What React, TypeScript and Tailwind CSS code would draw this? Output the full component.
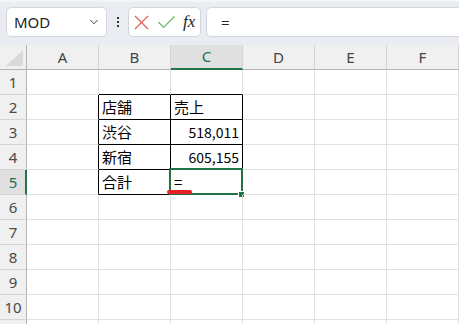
import { Check, ChevronDown, X } from 'lucide-react';

const cols = ['A', 'B', 'C', 'D', 'E', 'F'];
const rows = [1, 2, 3, 4, 5, 6, 7, 8, 9, 10, 11];

const data: Record<string, string> = {
  B2: '店舗',
  C2: '売上',
  B3: '渋谷',
  C3: '518,011',
  B4: '新宿',
  C4: '605,155',
  B5: '合計',
};

const numeric = ['C3', 'C4'];

// border colours per cell so the black table box sits on the grid lines
const borderFor = (r: number, c: string) => {
  const inTable = r >= 2 && r <= 5 && (c === 'B' || c === 'C');
  if (inTable) return 'border-r-black border-b-black';
  if (r === 1 && (c === 'B' || c === 'C')) return 'border-r-[#e1e1e1] border-b-black';
  if (c === 'A' && r >= 2 && r <= 5) return 'border-r-black border-b-[#e1e1e1]';
  return 'border-r-[#e1e1e1] border-b-[#e1e1e1]';
};

const Toolbar = () => (
  <div className="flex h-[45px] items-start border-t-2 border-[#f4f5f7] bg-[#e9ecf0] pl-[6px] pt-[5px]">
    {/* Name box */}
    <div className="flex h-[30px] w-[101px] items-center justify-between rounded-[5px] border border-[#d3d6da] bg-white pl-[7px] pr-[5px]">
      <span className="font-['Noto_Sans',sans-serif] text-[15px] text-[#222]">MOD</span>
      <ChevronDown size={14} strokeWidth={1.6} className="text-[#333]" />
    </div>

    <div className="ml-[10px] flex h-[30px] flex-col items-center justify-center gap-[2px]">
      <span className="h-[2px] w-[2px] bg-[#333]" />
      <span className="h-[2px] w-[2px] bg-[#333]" />
      <span className="h-[2px] w-[2px] bg-[#333]" />
    </div>

    {/* Cancel / enter / function */}
    <div className="ml-[9px] flex h-[30px] w-[73px] items-center rounded-[5px] border border-[#d3d6da] bg-white">
      <X size={25} strokeWidth={1.1} className="shrink-0 text-[#e25b5b]" />
      <Check size={23} strokeWidth={1.2} className="ml-[1px] shrink-0 text-[#5db65d]" />
      <span className="ml-[5px] font-['Liberation_Serif',serif] text-[17px] italic text-[#222]">fx</span>
    </div>

    {/* Formula input */}
    <div className="ml-[5px] mr-[-8px] flex h-[30px] flex-1 items-center rounded-[5px] border border-[#d3d6da] bg-white pl-[14px]">
      <span className="font-['Noto_Sans',sans-serif] text-[15px] text-[#222]">=</span>
    </div>
  </div>
);

const HeaderRow = () => (
  <div className="flex h-[25px]">
    <div className="relative h-[25px] w-[27px] shrink-0 border-b border-r border-[#b4b4b4] bg-[#f0f0f0]">
      <svg className="absolute left-0 top-0" width="26" height="24" viewBox="0 0 26 24">
        <polygon points="6,21 23,21 23,5" fill="#d9d9d9" />
      </svg>
    </div>
    {cols.map((c) =>
      c === 'C' ? (
        <div
          key={c}
          className="flex h-[25px] w-[72px] shrink-0 items-center justify-center border-b-2 border-r border-b-[#217346] border-r-[#d4d4d4] bg-[#e0e0e0] font-['Noto_Sans',sans-serif] text-[15px] text-[#1e6f52]"
        >
          {c}
        </div>
      ) : (
        <div
          key={c}
          className="flex h-[25px] w-[72px] shrink-0 items-center justify-center border-b border-r border-b-[#b4b4b4] border-r-[#d4d4d4] bg-[#f0f0f0] font-['Noto_Sans',sans-serif] text-[15px] text-[#444]"
        >
          {c}
        </div>
      )
    )}
  </div>
);

const Row = ({ r }: { r: number }) => (
  <div className="flex h-[25px]">
    {r === 5 ? (
      <div className="flex h-[25px] w-[27px] shrink-0 items-center justify-center border-b border-r-2 border-b-[#d4d4d4] border-r-[#217346] bg-[#e0e0e0] pl-[1px] font-['Noto_Sans',sans-serif] text-[15px] text-[#1e6f52]">
        {r}
      </div>
    ) : (
      <div className="flex h-[25px] w-[27px] shrink-0 items-center justify-center border-b border-r border-b-[#d4d4d4] border-r-[#b4b4b4] bg-[#f0f0f0] font-['Noto_Sans',sans-serif] text-[15px] text-[#4a4a4a]">
        {r < 11 ? r : ''}
      </div>
    )}
    {cols.map((c) => {
      const id = `${c}${r}`;
      const value = data[id];
      const isNum = numeric.includes(id);
      return (
        <div
          key={id}
          className={`relative flex h-[25px] w-[72px] shrink-0 items-center border-b border-r ${borderFor(r, c)} ${
            isNum ? 'justify-end pr-[3px]' : 'justify-start pl-[3px]'
          } font-['Noto_Sans_CJK_JP',sans-serif] text-[15px] text-black`}
        >
          {value && <span className={isNum ? 'text-[14px]' : ''}>{value}</span>}
          {id === 'C5' && (
            <>
              <span>=</span>
              <div className="absolute left-[-2px] top-[-2px] h-[27px] w-[74px] border-2 border-[#217346]" />
              <div className="absolute bottom-[-3px] right-[-2px] h-[5px] w-[5px] bg-[#217346] outline outline-1 outline-white" />
              <div className="absolute left-[-4px] top-[20px] h-[4px] w-[25px] rounded-full bg-[#e81e25]" />
            </>
          )}
        </div>
      );
    })}
  </div>
);

export default function App() {
  return (
    <div className="h-[324px] w-[459px] overflow-hidden bg-white">
      <Toolbar />
      <HeaderRow />
      {rows.map((r) => (
        <Row key={r} r={r} />
      ))}
    </div>
  );
}
